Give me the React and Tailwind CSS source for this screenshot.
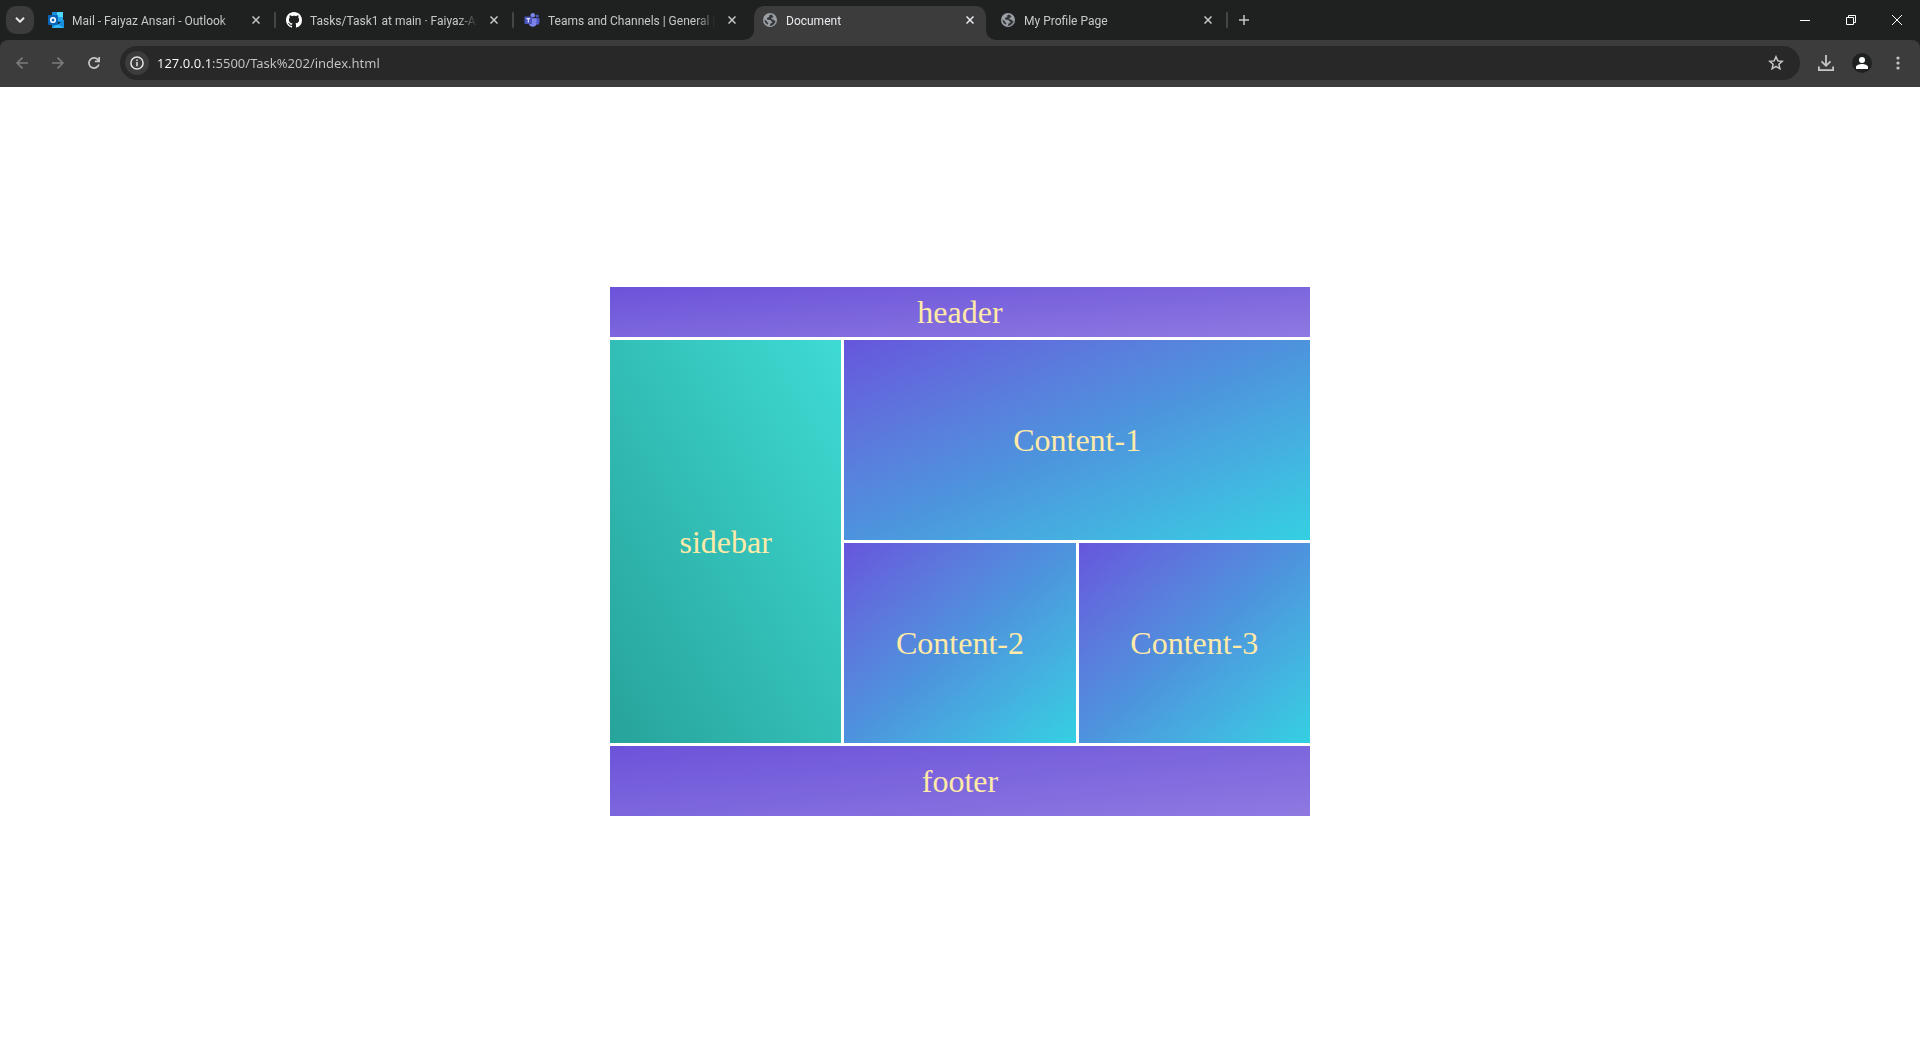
import React from "react";

function OutlookIcon() {
  return (
    <svg width="16" height="16" viewBox="0 0 16 16">
      <path d="M4 0h11v10H4z" fill="#1a86d9" />
      <path d="M4 0h5v5H4z" fill="#1b8fe0" />
      <path d="M9 0h6v5H9z" fill="#50d9ff" />
      <path d="M9 5h6v4H9z" fill="#28a8ea" />
      <path d="M4 9l6.500 3L16 7.500V16H4z" fill="#1490df" />
      <path d="M4 16h11.500L9.500 11.800z" fill="#32b8f2" />
      <rect x="0" y="3" width="10" height="10" rx="1" fill="#0a64b8" />
      <circle cx="5" cy="8" r="2.300" fill="none" stroke="#fff" strokeWidth="1.600" />
    </svg>
  );
}

function GithubIcon() {
  return (
    <svg width="16" height="16" viewBox="0 0 16 16" fill="#fff">
      <path d="M8 0C3.58 0 0 3.58 0 8c0 3.540 2.290 6.530 5.470 7.590.4.070.550-.170.550-.380 0-.190-.010-.820-.010-1.490-2.010.370-2.530-.490-2.690-.940-.090-.230-.480-.940-.820-1.130-.280-.150-.680-.520-.010-.530.630-.010 1.080.580 1.230.820.720 1.210 1.870.870 2.330.660.070-.520.280-.870.510-1.070-1.780-.200-3.640-.890-3.640-3.950 0-.870.310-1.590.820-2.150-.080-.200-.360-1.020.080-2.120 0 0 .670-.210 2.200.820.640-.180 1.320-.270 2-.270s1.360.090 2 .270c1.530-1.040 2.200-.820 2.200-.820.440 1.100.160 1.920.080 2.120.510.560.820 1.270.820 2.150 0 3.070-1.870 3.750-3.650 3.950.290.250.540.730.540 1.480 0 1.070-.010 1.930-.010 2.200 0 .210.150.460.550.380A8.010 8.010 0 0 0 16 8c0-4.420-3.580-8-8-8z" />
    </svg>
  );
}

function TeamsIcon() {
  return (
    <svg width="16" height="16" viewBox="0 0 16 16">
      <circle cx="13.200" cy="4" r="1.600" fill="#5059c9" />
      <path d="M11 6.300h4.500v4.200a2.250 2.250 0 0 1-4.500 0z" fill="#5059c9" />
      <circle cx="8.800" cy="3.200" r="2.300" fill="#7b83eb" />
      <path d="M5 6.300h7.500v4.700a3.750 3.750 0 0 1-7.500 0z" fill="#7b83eb" />
      <rect x="0.500" y="4.500" width="7.500" height="7.500" rx="0.800" fill="#4b53bc" />
      <path d="M2.400 6.700h3.700M4.250 6.700v3.800" stroke="#fff" strokeWidth="1" fill="none" />
    </svg>
  );
}

function GlobeIcon() {
  return (
    <svg width="16" height="16" viewBox="0 0 16 16">
      <circle cx="8" cy="8" r="7" fill="#9aa0a6" />
      <path
        d="M9.500 2.400C8 2.500 7 3.300 7.200 4.300c.2.800-.2 1-1.400 1.200-1.100.2-1.200 1.900-.1 2.200l2.500.3c.9.100.6 1.300 1.500 1.500 1 .2.900 1.200-.3 1.500-1.300.3-1 1.700-1.900 2.700 3.400.2 5.700-2.200 6.100-4.800-.7.200-1.300-.1-1.600-.8-.4-1-1.700-.4-2.300-.9-.7-.6-.2-1.500.7-1.600 1-.1 1.300-.9.600-1.700zM2.400 7.600c0 2.200 1.200 4.200 3.300 5.200l.6-1.300c.2-.6-.1-.9-.7-1.100-.7-.3-.4-1.200-1-1.500z"
        fill="#35383a"
      />
    </svg>
  );
}

function CloseIcon() {
  return (
    <svg width="8" height="8" viewBox="0 0 8 8" stroke="currentColor" strokeWidth="1.500">
      <path d="M.5.5l7 7M7.500.5l-7 7" />
    </svg>
  );
}

const tabs = [
  { title: "Mail - Faiyaz Ansari - Outlook", Icon: OutlookIcon, divider: true },
  { title: "Tasks/Task1 at main · Faiyaz-Ans", Icon: GithubIcon, divider: true },
  { title: "Teams and Channels | General |", Icon: TeamsIcon },
  { title: "Document", Icon: GlobeIcon, active: true },
  { title: "My Profile Page", Icon: GlobeIcon, divider: true },
];

function Tab({ title, Icon, active, divider }) {
  return (
    <div className="flex h-full w-[238px] min-w-0 pt-1.5">
      <div
        className={
          active
            ? "relative flex min-w-0 flex-1 items-center rounded-t-[10px] bg-[#3c3c3c] pb-1.5 pl-2 text-[#e8eaed]"
            : "relative flex min-w-0 flex-1 items-center pb-1.5 pl-2 text-[#c7c9c8]"
        }
      >
        {active && (
          <>
            <svg className="absolute bottom-0 -left-2.5" width="10" height="10" viewBox="0 0 10 10">
              <path d="M10 0v10H0A10 10 0 0 0 10 0z" fill="#3c3c3c" />
            </svg>
            <svg className="absolute -right-2.5 bottom-0" width="10" height="10" viewBox="0 0 10 10">
              <path d="M0 0v10h10A10 10 0 0 1 0 0z" fill="#3c3c3c" />
            </svg>
          </>
        )}
        <button type="button" className="flex min-w-0 flex-1 items-center gap-2 text-left">
          <span className="shrink-0"><Icon /></span>
          <span className="flex-1 overflow-hidden pt-0.5 text-[12px] leading-4 whitespace-nowrap [mask-image:linear-gradient(to_right,black_calc(100%-20px),transparent)]">
            {title}
          </span>
        </button>
        <button type="button" aria-label={"Close " + title} className="flex w-8 shrink-0 items-center justify-center">
          <CloseIcon />
        </button>
      </div>
      <div className="flex w-1.5 shrink-0 items-center justify-center pb-1.5">
        {divider && <span className="h-4 w-0.5 rounded-full bg-[#444746]" />}
      </div>
    </div>
  );
}

function TabStrip() {
  return (
    <div className="flex h-10 bg-[#1f2120] font-['Roboto',sans-serif]">
      <div className="flex w-10 shrink-0 items-center pl-1.5">
        <button type="button" aria-label="Search tabs" className="flex size-7 items-center justify-center rounded-[10px] bg-[#3c3c3c]">
          <svg width="10" height="6" viewBox="0 0 10 6" fill="none" stroke="#e3e3e3" strokeWidth="2">
            <path d="M1 .8l4 4 4-4" />
          </svg>
        </button>
      </div>
      {tabs.map((tab) => (
        <Tab key={tab.title} {...tab} />
      ))}
      <button type="button" aria-label="New tab" className="flex w-7 items-center justify-center">
        <svg width="10" height="10" viewBox="0 0 10 10" stroke="#c7c7c7" strokeWidth="1.500">
          <path d="M5 0v10M0 5h10" />
        </svg>
      </button>
      <div className="ml-auto flex text-white">
        <button type="button" aria-label="Minimize" className="flex w-[46px] items-center justify-center">
          <svg width="10" height="10" viewBox="0 0 10 10" fill="currentColor">
            <path d="M0 5h10v1H0z" />
          </svg>
        </button>
        <button type="button" aria-label="Restore" className="flex w-[46px] items-center justify-center">
          <svg width="10" height="10" viewBox="0 0 10 10" fill="none" stroke="currentColor">
            <path d="M.5 2.500h7v7h-7zM2.500 2.500v-2h7v7h-2" />
          </svg>
        </button>
        <button type="button" aria-label="Close window" className="flex w-[46px] items-center justify-center">
          <svg width="10" height="10" viewBox="0 0 10 10" stroke="currentColor">
            <path d="M0 0l10 10M10 0L0 10" />
          </svg>
        </button>
      </div>
    </div>
  );
}

function Toolbar() {
  return (
    <div className="bg-[#1f2120] font-['Noto_Sans',sans-serif]">
      <div className="flex h-[47px] items-center rounded-t-lg bg-[#3c3c3c] px-1 pb-px">
        <button type="button" aria-label="Back" className="flex h-8 w-9 items-center justify-center text-[#7c7c7c]">
          <svg width="12" height="12" viewBox="0 0 12 12" fill="none" stroke="currentColor" strokeWidth="1.600">
            <path d="M12 6H1M6.500.6L1.100 6l5.400 5.400" />
          </svg>
        </button>
        <button type="button" aria-label="Forward" className="flex h-8 w-9 items-center justify-center text-[#7c7c7c]">
          <svg width="12" height="12" viewBox="0 0 12 12" fill="none" stroke="currentColor" strokeWidth="1.600">
            <path d="M0 6h11M5.500.6L10.900 6l-5.400 5.400" />
          </svg>
        </button>
        <button type="button" aria-label="Reload" className="flex h-8 w-9 items-center justify-center text-[#c7c7c7]">
          <svg width="12" height="12" viewBox="0 0 12 12" fill="none" stroke="currentColor" strokeWidth="1.700">
            <path d="M10.900 7.500A5.100 5.100 0 1 1 9.700 2.400L11 3.800M11.200 0v4.300H6.900" />
          </svg>
        </button>
        <div className="ml-2 flex h-[34px] min-w-0 flex-1 items-center rounded-full bg-[#282828] pl-[5px] text-[#c7c7c7]">
          <button type="button" aria-label="View site information" className="flex size-6 shrink-0 items-center justify-center rounded-full bg-[#3c3c3c] text-[#e3e3e3]">
            <svg width="14" height="14" viewBox="0 0 14 14" fill="none" stroke="currentColor" strokeWidth="1.500">
              <circle cx="7" cy="7" r="6.100" />
              <path d="M7 6v4.300M7 3.500V5" />
            </svg>
          </button>
          <input
            type="text"
            aria-label="Address"
            defaultValue="127.0.0.1:5500/Task%202/index.html"
            className="ml-2 min-w-0 flex-1 bg-[linear-gradient(to_right,#ffffff_55px,#c7c7c7_55px)] bg-clip-text text-[13px] leading-5 text-transparent outline-none"
          />
          <button type="button" aria-label="Bookmark this tab" className="flex h-8 w-12 shrink-0 items-center justify-center">
            <svg width="16" height="16" viewBox="0 0 16 16" fill="none" stroke="currentColor" strokeWidth="1.500">
              <path d="M8 1.800l1.800 4.100 4.500.4-3.400 3 1 4.400L8 11.400l-3.900 2.300 1-4.400-3.400-3 4.500-.4z" />
            </svg>
          </button>
        </div>
        <button type="button" aria-label="Downloads" className="ml-2 flex h-8 w-9 items-center justify-center text-[#c7c7c7]">
          <svg width="16" height="16" viewBox="0 0 16 16" fill="none" stroke="currentColor" strokeWidth="1.800">
            <path d="M8 0v10.500M3.500 6.300L8 10.800l4.500-4.500M.9 11.500v3.600h14.200v-3.600" />
          </svg>
        </button>
        <button type="button" aria-label="Profile" className="flex h-8 w-9 items-center justify-center">
          <span className="flex size-5 items-center justify-center rounded-full bg-[#1f2120]">
            <svg width="12" height="12" viewBox="0 0 12 12" fill="#fff">
              <circle cx="6" cy="3" r="3" />
              <path d="M0 12v-2c0-2 3.500-3 6-3s6 1 6 3v2z" />
            </svg>
          </span>
        </button>
        <button type="button" aria-label="Menu" className="flex h-8 w-9 items-center justify-center text-[#c7c7c7]">
          <svg width="4" height="14" viewBox="0 0 4 14" fill="currentColor">
            <circle cx="2" cy="2" r="1.600" />
            <circle cx="2" cy="7" r="1.600" />
            <circle cx="2" cy="12" r="1.600" />
          </svg>
        </button>
      </div>
    </div>
  );
}

export default function App() {
  return (
    <div className="min-h-screen bg-white">
      <TabStrip />
      <Toolbar />
      <div className="mx-auto mt-[200px] grid max-w-[700px] grid-cols-3 grid-rows-[50px_200px_200px_70px] gap-[3px] font-['Liberation_Serif',serif] text-[32px] leading-9 text-[#ffeaa7]">
        <header className="col-span-3 flex items-center justify-center bg-linear-to-br from-[#6c52d9] to-[#8f79e1]">header</header>
        <aside className="row-span-2 flex items-center justify-center bg-linear-to-tr from-[#27a39b] to-[#3edbd4]">sidebar</aside>
        <section className="col-span-2 flex items-center justify-center bg-linear-to-br from-[#6655dc] via-[#4d93dd] to-[#33d0e2]">Content-1</section>
        <section className="flex items-center justify-center bg-linear-to-br from-[#6655dc] via-[#4d93dd] to-[#33d0e2]">Content-2</section>
        <section className="flex items-center justify-center bg-linear-to-br from-[#6655dc] via-[#4d93dd] to-[#33d0e2]">Content-3</section>
        <footer className="col-span-3 flex items-center justify-center bg-linear-to-br from-[#6c52d9] to-[#8f79e1]">footer</footer>
      </div>
    </div>
  );
}
